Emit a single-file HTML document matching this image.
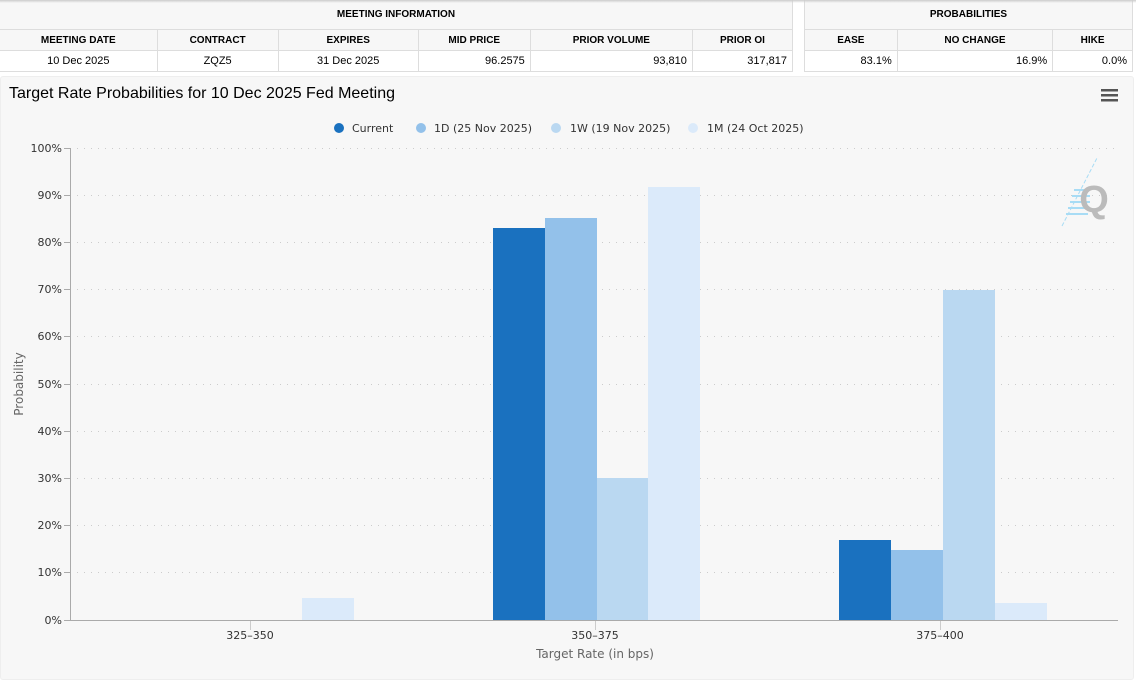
<!DOCTYPE html>
<html><head><meta charset="utf-8"><style>
body{margin:0;width:1136px;height:680px;background:#fff;position:relative;overflow:hidden;font-family:"Liberation Sans",Arial,sans-serif}
table{position:absolute;top:0;border-collapse:collapse;font-size:11px;color:#000}
td,th{border:1px solid #ddd;height:20px;padding:0 5px}
th{font-weight:bold;font-size:10px;background:#f7f7f7;text-align:center}
tr.h1 th{height:29px;border-top:none}
tr.h2 th{height:20px}
td{text-align:right}
td.c{text-align:center}
.shadow{position:absolute;top:0;left:0;width:1136px;height:3px;background:linear-gradient(#ccc,rgba(255,255,255,0))}
.panel{position:absolute;left:0;top:76px;width:1134px;height:604px;background:#f7f7f7;border-radius:3px;border:1px solid #eee;box-sizing:border-box}
</style></head><body>
<table style="left:0;width:793px">
<colgroup><col style="width:157px"><col style="width:121px"><col style="width:140px"><col style="width:112px"><col style="width:162px"><col style="width:100px"></colgroup>
<tr class="h1"><th colspan="6" style="border-left:none">MEETING INFORMATION</th></tr>
<tr class="h2"><th style="border-left:none">MEETING DATE</th><th>CONTRACT</th><th>EXPIRES</th><th>MID PRICE</th><th>PRIOR VOLUME</th><th>PRIOR OI</th></tr>
<tr><td class="c" style="border-left:none">10 Dec 2025</td><td class="c">ZQZ5</td><td class="c">31 Dec 2025</td><td>96.2575</td><td>93,810</td><td>317,817</td></tr>
</table>
<table style="left:804px;width:329px">
<colgroup><col style="width:93px"><col style="width:156px"><col style="width:80px"></colgroup>
<tr class="h1"><th colspan="3">PROBABILITIES</th></tr>
<tr class="h2"><th>EASE</th><th>NO CHANGE</th><th>HIKE</th></tr>
<tr><td>83.1%</td><td>16.9%</td><td>0.0%</td></tr>
</table>
<div class="shadow"></div>
<div class="panel"></div>
<svg style="position:absolute;left:0;top:0" width="1136" height="680" font-family="DejaVu Sans,sans-serif">
<text x="9" y="98" font-family="Liberation Sans,Arial,sans-serif" font-size="16" fill="#000">Target Rate Probabilities for 10 Dec 2025 Fed Meeting</text>
<g fill="#555"><rect x="1101" y="89" width="17" height="2.5"/><rect x="1101" y="94" width="17" height="2.5"/><rect x="1101" y="99" width="17" height="2.5"/></g>
<g font-size="11" fill="#333">
<circle cx="339" cy="128" r="5" fill="#1a71bf"/><text x="352" y="132">Current</text>
<circle cx="421" cy="128" r="5" fill="#93c1ea"/><text x="434" y="132">1D (25 Nov 2025)</text>
<circle cx="556" cy="128" r="5" fill="#bad8f1"/><text x="570" y="132">1W (19 Nov 2025)</text>
<circle cx="693" cy="128" r="5" fill="#dbeafa"/><text x="707" y="132">1M (24 Oct 2025)</text>
</g>
<g stroke="#ccc" stroke-dasharray="1,6" stroke-width="1">
<line x1="70" x2="1118" y1="148.5" y2="148.5"/><line x1="70" x2="1118" y1="195.5" y2="195.5"/><line x1="70" x2="1118" y1="242.5" y2="242.5"/><line x1="70" x2="1118" y1="289.5" y2="289.5"/><line x1="70" x2="1118" y1="336.5" y2="336.5"/><line x1="70" x2="1118" y1="384.5" y2="384.5"/><line x1="70" x2="1118" y1="431.5" y2="431.5"/><line x1="70" x2="1118" y1="478.5" y2="478.5"/><line x1="70" x2="1118" y1="525.5" y2="525.5"/><line x1="70" x2="1118" y1="572.5" y2="572.5"/>
</g>
<g font-size="11" fill="#333" text-anchor="end">
<text x="62" y="152">100%</text><text x="62" y="199">90%</text><text x="62" y="246">80%</text><text x="62" y="293">70%</text><text x="62" y="340">60%</text><text x="62" y="388">50%</text><text x="62" y="435">40%</text><text x="62" y="482">30%</text><text x="62" y="529">20%</text><text x="62" y="576">10%</text><text x="62" y="624">0%</text>
</g>
<g stroke="#aaa"><line x1="64" x2="70" y1="148.5" y2="148.5"/><line x1="64" x2="70" y1="195.5" y2="195.5"/><line x1="64" x2="70" y1="242.5" y2="242.5"/><line x1="64" x2="70" y1="289.5" y2="289.5"/><line x1="64" x2="70" y1="336.5" y2="336.5"/><line x1="64" x2="70" y1="384.5" y2="384.5"/><line x1="64" x2="70" y1="431.5" y2="431.5"/><line x1="64" x2="70" y1="478.5" y2="478.5"/><line x1="64" x2="70" y1="525.5" y2="525.5"/><line x1="64" x2="70" y1="572.5" y2="572.5"/><line x1="64" x2="70" y1="620.5" y2="620.5"/></g>
<g>
<rect x="302" y="598" width="52" height="22" fill="#dbeafa"/>
<rect x="493" y="228" width="52" height="392" fill="#1a71bf"/>
<rect x="545" y="218" width="52" height="402" fill="#93c1ea"/>
<rect x="597" y="478" width="51" height="142" fill="#bad8f1"/>
<rect x="648" y="187" width="52" height="433" fill="#dbeafa"/>
<rect x="839" y="540" width="52" height="80" fill="#1a71bf"/>
<rect x="891" y="550" width="52" height="70" fill="#93c1ea"/>
<rect x="943" y="290" width="52" height="330" fill="#bad8f1"/>
<rect x="995" y="603" width="52" height="17" fill="#dbeafa"/>
</g>
<line x1="70.5" x2="70.5" y1="148" y2="620" stroke="#aaa"/>
<line x1="70" x2="1118" y1="620.5" y2="620.5" stroke="#aaa"/>
<g stroke="#ccc"><line x1="250.5" x2="250.5" y1="621" y2="630"/><line x1="595.5" x2="595.5" y1="621" y2="630"/><line x1="940.5" x2="940.5" y1="621" y2="630"/></g>
<g font-size="11" fill="#333" text-anchor="middle">
<text x="250" y="639">325–350</text><text x="595" y="639">350–375</text><text x="940" y="639">375–400</text>
<text x="595" y="658" font-size="12" fill="#666">Target Rate (in bps)</text>
<text transform="translate(23,384) rotate(-90)" font-size="12" fill="#666">Probability</text>
</g>
<g stroke="#a8dcf5" stroke-width="1" stroke-dasharray="4,2"><line x1="1062" y1="226" x2="1097" y2="158"/></g>
<g stroke="#a8dcf5" stroke-width="2"><line x1="1074" y1="190" x2="1090" y2="190"/><line x1="1072" y1="196" x2="1090" y2="196"/><line x1="1070" y1="202" x2="1090" y2="202"/><line x1="1068" y1="208" x2="1090" y2="208"/><line x1="1066" y1="214" x2="1088" y2="214"/></g>
<text x="1094" y="212" font-family="Liberation Sans,sans-serif" font-weight="bold" font-size="38" fill="#bbb" text-anchor="middle">Q</text>
</svg>
</body></html>
